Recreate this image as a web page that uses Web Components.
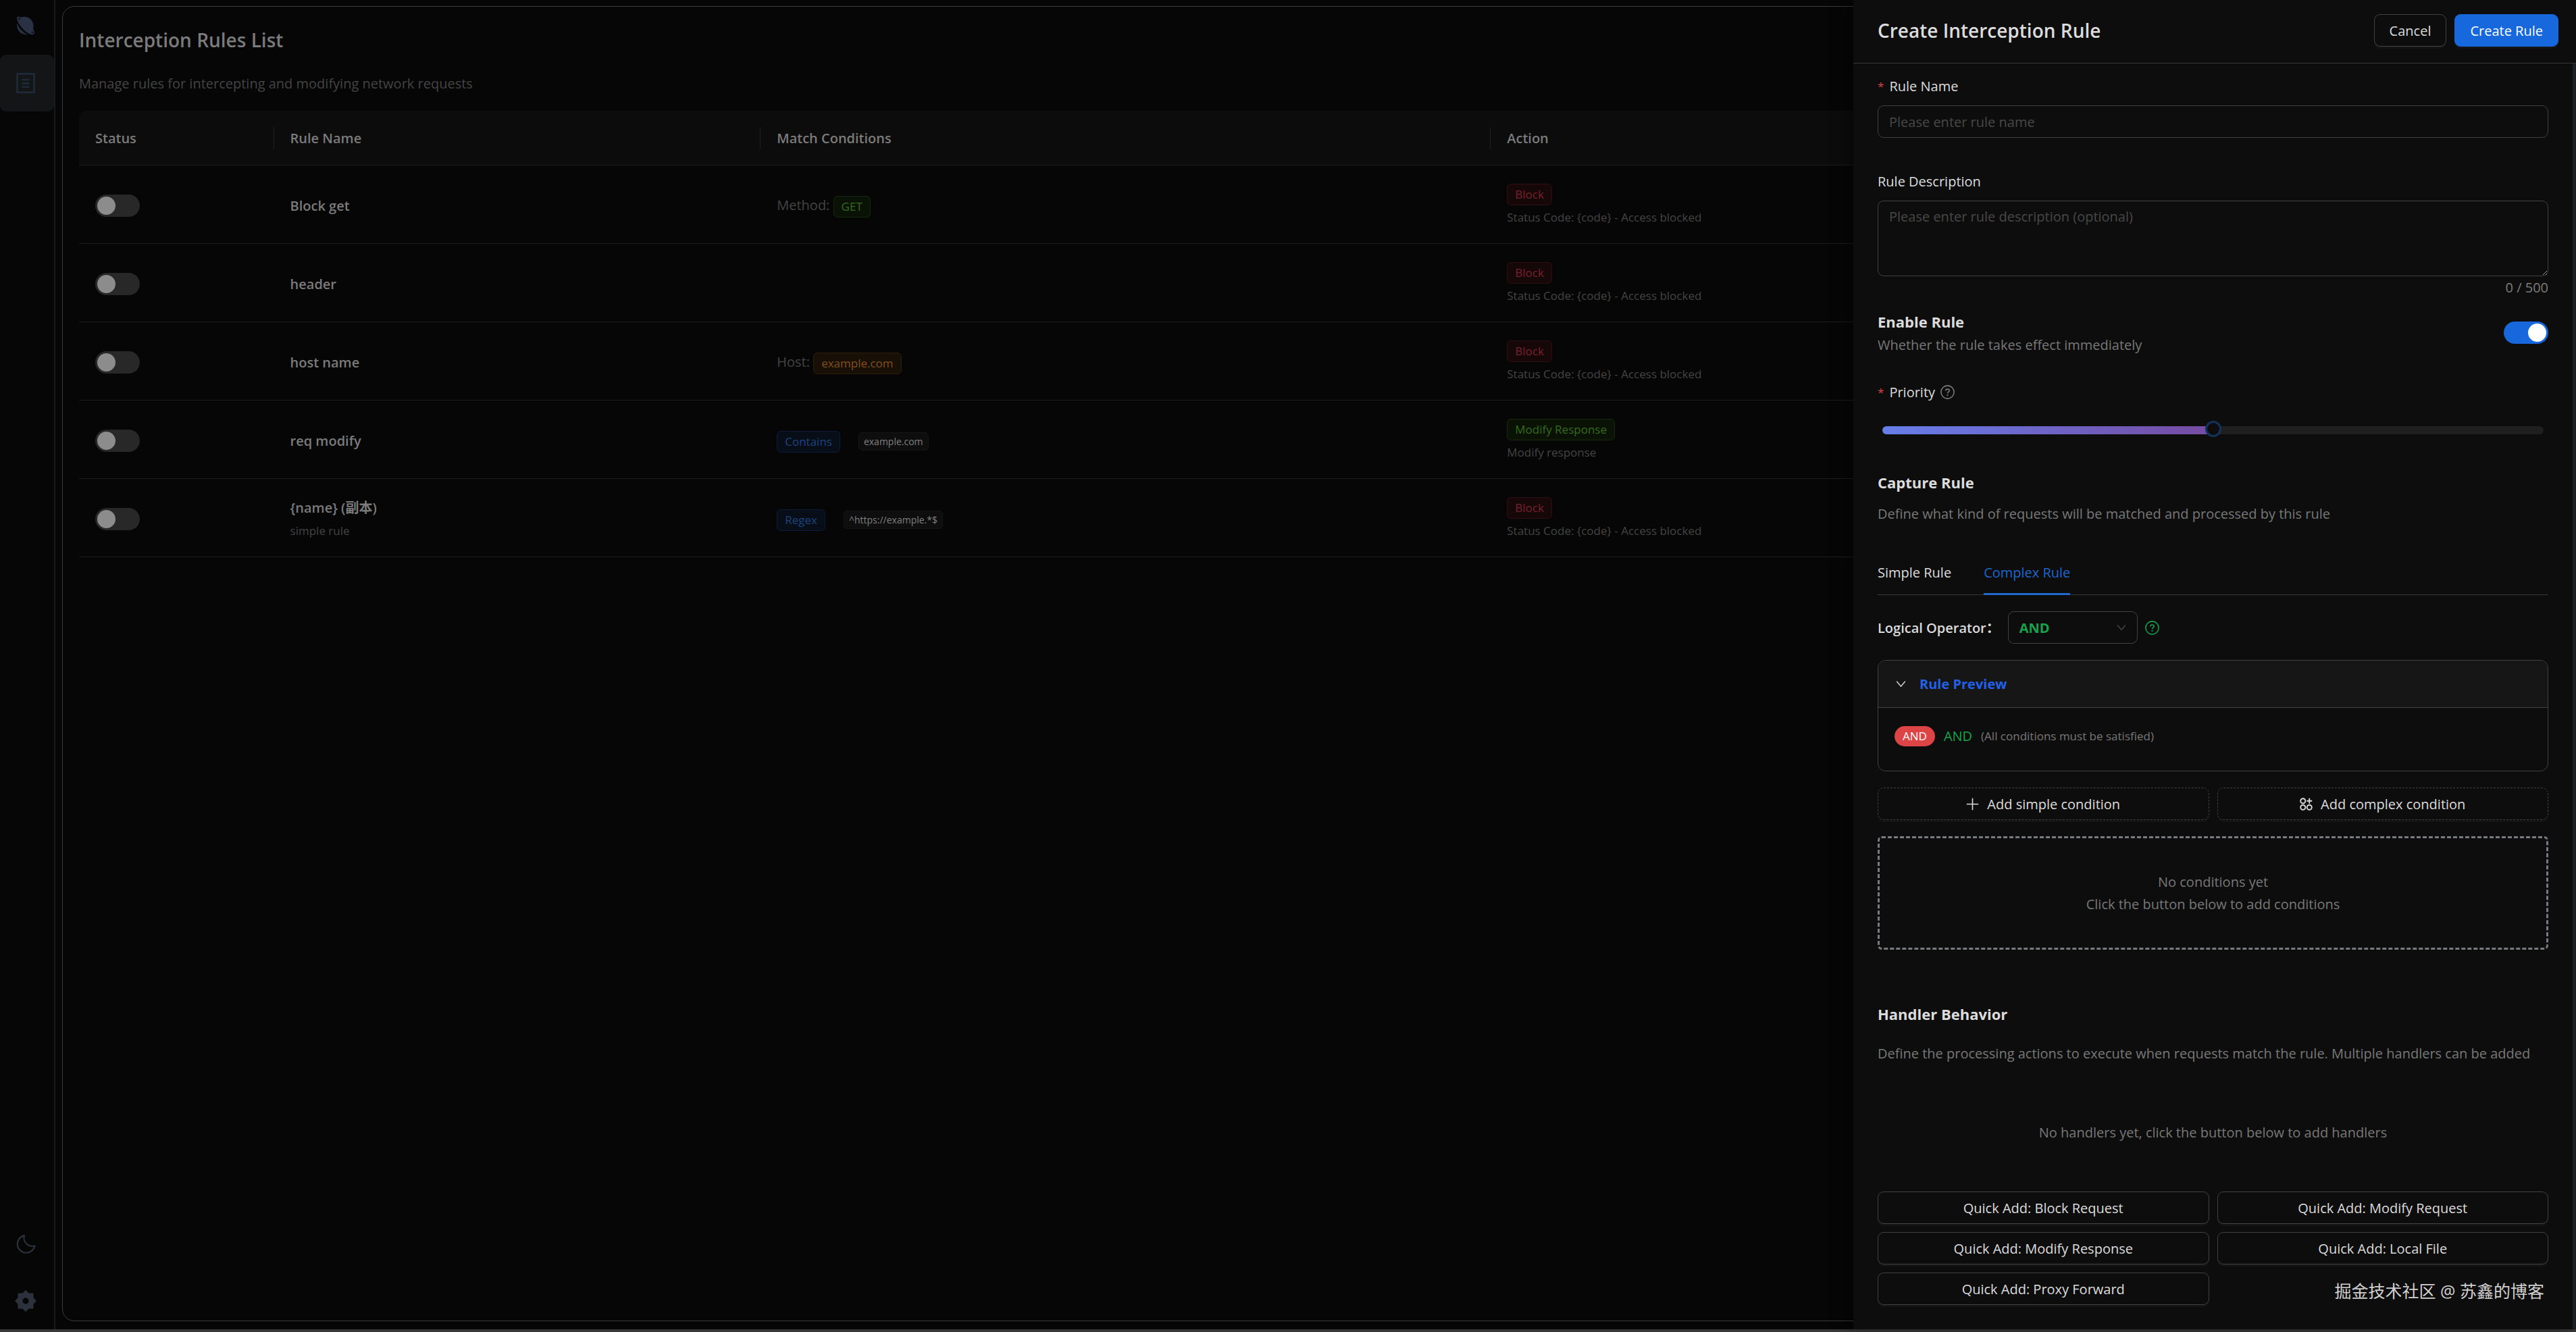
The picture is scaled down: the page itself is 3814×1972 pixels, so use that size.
<!DOCTYPE html>
<html lang="en">
<head>
<meta charset="utf-8">
<title>Interception Rules</title>
<style>
  html, body {
    height: 100%;
    margin: 0;
  }

  body {
    background: #060606;
    font: 20px/33px "Open Sans", "Noto Sans", "Noto Sans CJK SC", sans-serif;
    overflow: hidden;
  }
</style>
</head>
<body>
<app-shell>
  <side-bar slot="nav"></side-bar>
  <rules-panel></rules-panel>
  <rule-drawer slot="overlay"></rule-drawer>
</app-shell>

<script>
(function() {

  /**
   * Paths of the icons, by name. Every icon uses a 24 unit box.
   *
   * @readonly
   */
  const ICONS = {
    planet: `<path fill="currentColor" d="M4.2.8C2.100 0 .7 1 1 3.300c.4 3.600 3.200 8.300 7.200 12.500 4.200 4.400 8.700 7.300 12 7.500 2.600.1 3.400-1.900 2.500-4.600-.3-.9-.7-1.800-1.200-2.700 1-4.400 0-9-3-12C15 .6 9.800-.1 5.900 1.600A9 9 0 0 0 4.200.8z"/><path fill="currentColor" d="M1 8.600c-.6 4.400.7 8.700 3.700 11.600 2.500 2.500 6 3.600 9.600 3.200-2.600-1.300-5.300-3.300-7.800-5.900C4 14.900 2.100 11.800 1 8.600z"/><circle cx="4" cy="3.400" r="1" fill="#060606"/><circle cx="20.700" cy="20.600" r="1" fill="#060606"/>`,
    list: `<path fill="none" stroke="currentColor" stroke-width="2" d="M2 1h20v22H2zM7.500 8h9M7.500 12.300h9M7.500 16.600h9"/>`,
    moon: `<path fill="none" stroke="currentColor" stroke-width="1.700" stroke-linejoin="round" d="M10.300 1.700A10.400 10.400 0 1 0 22.800 14 10.200 10.200 0 0 1 10.300 1.700z"/>`,
    gear: `<path fill="currentColor" fill-rule="evenodd" d="M12 0l3.500 3.400h5.100v5.100L24 12l-3.400 3.500v5.100h-5.100L12 24l-3.500-3.400H3.400v-5.100L0 12l3.400-3.500V3.400h5.100zM12 8.600a3.400 3.400 0 1 0 0 6.800 3.400 3.400 0 0 0 0-6.800z"/>`,
    help: `<g fill="none" stroke="currentColor" stroke-width="1.800"><circle cx="12" cy="12" r="11"/><path d="M8.900 9.700c0-1.700 1.400-2.900 3.100-2.900s3.100 1.100 3.100 2.700c0 2.200-3.100 2.200-3.100 4.600"/></g><circle cx="12" cy="17" r="1.200" fill="currentColor"/>`,
    down: `<path fill="none" stroke="currentColor" stroke-width="2.200" d="M2 6l10 12L22 6"/>`,
    plus: `<path fill="none" stroke="currentColor" stroke-width="2" d="M12 1v22M1 12h22"/>`,
    nodes: `<g fill="none" stroke="currentColor" stroke-width="2.400"><circle cx="6" cy="6" r="4.500"/><circle cx="6" cy="18" r="4.500"/><circle cx="18" cy="18" r="4.500"/><path d="M18 1v10M13 6h10"/></g>`
  };

  /**
   * The rules that the table lists.
   */
  const RULES = [
    {name: 'Block get', match: 'Method: <rule-tag color="green">GET</rule-tag>', action: 'block'},
    {name: 'header', match: '', action: 'block'},
    {name: 'host name', match: 'Host: <rule-tag color="orange">example.com</rule-tag>', action: 'block'},
    {name: 'req modify', match: '<rule-tag color="blue">Contains</rule-tag><code>example.com</code>', action: 'modify'},
    {name: '{name} (副本)', note: 'simple rule', match: '<rule-tag color="blue">Regex</rule-tag><code>^https://example.*$</code>', action: 'block'}
  ];

  const ACTIONS = {
    block: '<rule-tag color="red">Block</rule-tag><small>Status Code: {code} - Access blocked</small>',
    modify: '<rule-tag color="green">Modify Response</rule-tag><small>Modify response</small>'
  };

  /**
   * Base of all the elements: stamps the class' markup into a shadow root.
   */
  class BaseElement extends HTMLElement {
    constructor() {
      super();
      this.attachShadow({mode: 'open'});
      const template = document.createElement('template');
      template.innerHTML = `<style>*{box-sizing:border-box}${this.constructor.css}</style>${this.render()}`;
      this.shadowRoot.appendChild(template.content.cloneNode(true));
    }
  }

  /**
   * `<ui-icon name="gear">` draws one icon at the size of `--size`.
   */
  class UiIcon extends BaseElement {
    static get css() {
      return `
        :host { display: inline-flex; flex: none; width: var(--size, 21px); height: var(--size, 21px); }
        svg { width: 100%; height: 100%; overflow: visible; }
      `;
    }
    render() {
      return `<svg viewBox="0 0 24 24" aria-hidden="true">${ICONS[this.getAttribute('name')]}</svg>`;
    }
  }

  /**
   * `<rule-tag color="red">` is a small bordered tag.
   */
  class RuleTag extends BaseElement {
    static get css() {
      return `
        :host {
          display: inline-block;
          box-sizing: border-box;
          height: 32px;
          padding: 0 11px;
          border: 1px solid;
          border-radius: 6px;
          font-size: 17px;
          line-height: 30px;
          vertical-align: middle;
        }
        :host([color="green"]) { color: #366b1b; background: #0a1206; border-color: #17280e; }
        :host([color="orange"]) { color: #83501a; background: #180f07; border-color: #2f1d0c; }
        :host([color="blue"]) { color: #1d437f; background: #080e18; border-color: #0d1c38; }
        :host([color="red"]) { color: #7a2029; background: #160709; border-color: #2d0f14; }
      `;
    }
    render() {
      return '<slot></slot>';
    }
  }

  /**
   * `<toggle-switch>` is a switch. Its content is the label; a switch with
   * no content takes its label from `name`.
   */
  class ToggleSwitch extends BaseElement {
    static get css() {
      return `
        :host { display: flex; align-items: center; justify-content: space-between; }
        input {
          appearance: none;
          flex: none;
          width: 66px;
          height: 33px;
          margin: 0;
          padding: 3px;
          border-radius: 17px;
          background: #282828;
        }
        input::before {
          content: "";
          display: block;
          width: 27px;
          height: 27px;
          border-radius: 50%;
          background: #8c8c8c;
        }
        input:checked { background: #1668dc; }
        input:checked::before { margin-left: auto; background: #fff; }
      `;
    }
    render() {
      const name = this.getAttribute('name');
      return `
        ${name ? '' : '<label for="toggle"><slot></slot></label>'}
        <input id="toggle" type="checkbox" role="switch" ${name ? `aria-label="${name}"` : ''} ${this.hasAttribute('checked') ? 'checked' : ''}>
      `;
    }
  }

  /**
   * `<ui-button>` wraps a button. `kind` is "primary" or "dashed".
   */
  class UiButton extends BaseElement {
    static get css() {
      return `
        :host { display: block; }
        button {
          display: flex;
          align-items: center;
          justify-content: center;
          gap: 12px;
          width: 100%;
          height: 48px;
          padding: 0 22px;
          border: 1px solid #424242;
          border-radius: 9px;
          background: #0d0d0d;
          color: #dcdcdc;
          font: inherit;
          box-shadow: 0 3px 0 rgba(255, 255, 255, .03);
        }
        :host([kind="primary"]) button { background: #1668dc; border-color: #1668dc; color: #fff; }
        :host([kind="dashed"]) button { border-style: dashed; }
      `;
    }
    render() {
      return '<button type="button"><slot></slot></button>';
    }
  }

  class TextField extends BaseElement {
    static get css() {
      return `
        :host { display: block; }
        label { display: flex; align-items: center; gap: 8px; margin-bottom: 12px; color: #dcdcdc; }
        :host([required]) label::before { content: "*"; color: #dc4446; font-size: 17px; }
        input, textarea {
          display: block;
          width: 100%;
          height: 48px;
          padding: 0 16px;
          border: 1px solid #424242;
          border-radius: 9px;
          background: #0d0d0d;
          color: #dcdcdc;
          font: inherit;
        }
        textarea { height: 112px; padding: 6px 16px; color-scheme: dark; }
        ::placeholder { color: #484848; opacity: 1; }
        output { display: block; text-align: right; color: #7c7c7c; }
      `;
    }
    render() {
      const hint = this.getAttribute('hint');
      const box = this.hasAttribute('rows')
        ? `<textarea id="box" maxlength="500" placeholder="${hint}"></textarea><output for="box">0 / 500</output>`
        : `<input id="box" type="text" placeholder="${hint}">`;
      return `<label for="box">${this.getAttribute('label')}</label>${box}`;
    }
  }

  /**
   * `<priority-slider>` is the labelled priority slider.
   */
  class PrioritySlider extends BaseElement {
    static get css() {
      return `
        :host { display: block; }
        label { display: flex; align-items: center; gap: 8px; color: #dcdcdc; }
        label::before { content: "*"; color: #dc4446; font-size: 17px; }
        ui-icon { color: #7b7b7b; }
        input { appearance: none; display: block; width: calc(100% - 14px); height: 24px; margin: 28px 7px 0; background: none; }
        input::-webkit-slider-runnable-track {
          height: 12px;
          border-radius: 6px;
          background: linear-gradient(90deg, #667eea, #764ba2) 0 0 / 50% 100% no-repeat #1f1f1f;
        }
        input::-webkit-slider-thumb {
          appearance: none;
          width: 24px;
          height: 24px;
          margin-top: -8px;
          border: 3px solid #15325b;
          border-radius: 50%;
          background: #0d0d0d;
        }
      `;
    }
    render() {
      return `
        <label for="priority">Priority<ui-icon name="help"></ui-icon></label>
        <input id="priority" type="range" min="0" max="100" value="50">
      `;
    }
  }

  /**
   * `<section-head>` is a heading with its description below it.
   */
  class SectionHead extends BaseElement {
    static get css() {
      return `
        :host { display: flex; flex-direction: column; gap: var(--gap, 0px); }
        h3 { margin: 0; color: #dcdcdc; font-size: 22px; font-weight: 700; line-height: 36px; }
        p { margin: 0; color: #787878; }
      `;
    }
    render() {
      return '<h3><slot name="title"></slot></h3><p><slot></slot></p>';
    }
  }

  /**
   * `<side-bar>` is the column of icons at the left.
   */
  class SideBar extends BaseElement {
    static get css() {
      return `
        :host { display: block; height: 100%; }
        nav {
          display: flex;
          flex-direction: column;
          height: 100%;
          width: 82px;
          border-right: 2px solid #1b1b1b;
        }
        ui-icon { --size: 28px; }
        .logo { padding: 24px 27px 0 24px; height: 81px; color: #2a3145; }
        button {
          display: flex;
          align-items: center;
          justify-content: center;
          height: 84px;
          padding: 0 4px 0 0;
          border: 0;
          border-radius: 9px;
          background: none;
          color: #2c323b;
        }
        button ui-icon { --size: 30px; }
        button[aria-current] { background: #141517; color: #1e2c3a; }
        button:last-child ui-icon { --size: 32px; }
        .space { flex: 1; }
      `;
    }
    render() {
      return `
        <nav>
          <div class="logo"><ui-icon name="planet"></ui-icon></div>
          <button aria-label="Rules" aria-current="page"><ui-icon name="list"></ui-icon></button>
          <div class="space"></div>
          <button aria-label="Theme"><ui-icon name="moon"></ui-icon></button>
          <button aria-label="Settings"><ui-icon name="gear"></ui-icon></button>
        </nav>
      `;
    }
  }

  /**
   * `<rules-panel>` is the card with the table of the rules.
   */
  class RulesPanel extends BaseElement {
    static get css() {
      return `
        :host {
          display: block;
          box-sizing: border-box;
          height: 100%;
          padding: 22px 24px;
          border: 1px solid #3c3c3c;
          border-radius: 18px;
          color: #444;
        }
        h2 { margin: 0; color: #7b7b7b; font-size: 28px; font-weight: 600; line-height: 54px; }
        p { margin: 21px 0 24px; }
        table { width: 100%; border-collapse: separate; border-spacing: 0; table-layout: fixed; }
        col:nth-child(1) { width: 7.88%; }
        col:nth-child(2) { width: 19.68%; }
        col:nth-child(3) { width: 29.52%; }
        th, td { padding: 0 24px; border-bottom: 1px solid #1e1e1e; text-align: left; font-weight: 400; }
        th {
          height: 81px;
          background: linear-gradient(#202020, #202020) 100% 50% / 1px 33px no-repeat #0c0c0c;
          color: #7b7b7b;
          font-weight: 600;
        }
        th:first-child { border-top-left-radius: 12px; }
        th:last-child { background: #0c0c0c; }
        td { height: 116px; padding-top: 4px; }
        strong { display: block; color: #7b7b7b; font-weight: 600; }
        small { display: block; font-size: 17px; line-height: 35px; }
        code {
          display: inline-block;
          margin-left: 27px;
          padding: 0 7px;
          border: 1px solid #151515;
          border-radius: 5px;
          background: #0e0e0e;
          color: #808080;
          font: 14px/25px "Open Sans", sans-serif;
          vertical-align: middle;
        }
      `;
    }
    render() {
      const rows = RULES.map((rule) => `
        <tr>
          <td><toggle-switch name="${rule.name}"></toggle-switch></td>
          <td><strong>${rule.name}</strong>${rule.note ? `<small>${rule.note}</small>` : ''}</td>
          <td>${rule.match}</td>
          <td>${ACTIONS[rule.action]}</td>
        </tr>
      `).join('');
      return `
        <h2>Interception Rules List</h2>
        <p>Manage rules for intercepting and modifying network requests</p>
        <table>
          <colgroup><col><col><col><col></colgroup>
          <thead><tr><th>Status</th><th>Rule Name</th><th>Match Conditions</th><th>Action</th></tr></thead>
          <tbody>${rows}</tbody>
        </table>
      `;
    }
  }

  /**
   * `<condition-editor>` holds the tabs, the operator and the conditions.
   */
  class ConditionEditor extends BaseElement {
    static get css() {
      return `
        :host { display: flex; flex-direction: column; gap: 24px; color: #dcdcdc; }
        .tabs { display: flex; gap: 48px; height: 50px; border-bottom: 1px solid #383838; }
        .tabs button {
          height: 50px;
          padding: 0 0 14px;
          border: 0;
          border-bottom: 3px solid transparent;
          background: none;
          color: inherit;
          font: inherit;
        }
        .tabs button[aria-selected="true"] { border-color: #1f6ad1; color: #1f66cc; }
        .operator { display: flex; align-items: center; gap: 12px; font-weight: 600; }
        .select { display: grid; align-items: center; }
        .select > * { grid-area: 1 / 1; }
        .select ui-icon { --size: 14px; justify-self: end; margin-right: 17px; color: #4a4a4a; }
        select {
          appearance: none;
          width: 192px;
          height: 48px;
          padding: 0 16px;
          border: 1px solid #424242;
          border-radius: 9px;
          background: #0d0d0d;
          color: #16a34a;
          font: inherit;
          font-weight: 700;
        }
        .operator > ui-icon { margin-left: -1px; color: #16a34a; }
        details { border: 1px solid #424242; border-radius: 12px; overflow: hidden; }
        summary {
          display: flex;
          align-items: center;
          gap: 20px;
          height: 70px;
          padding: 0 26px;
          border-bottom: 1px solid #424242;
          background: #161616;
          color: #2161ea;
          font-weight: 700;
        }
        summary ui-icon { --size: 15px; color: #dcdcdc; }
        .preview { display: flex; align-items: center; gap: 13px; height: 93px; padding: 0 24px 10px; color: #16a34a; }
        .preview b { padding: 0 12px; border-radius: 15px; background: #dc4446; color: #fff; font-weight: 400; font-size: 17px; line-height: 30px; }
        .preview span { font-weight: 500; }
        .preview small { color: #787878; font-size: 17px; }
        .pair { display: grid; grid-template-columns: 1fr 1fr; gap: 12px; }
        .pair ui-icon { --size: 19px; }
        .empty {
          display: flex;
          flex-direction: column;
          justify-content: center;
          height: 168px;
          border: 3px dashed #777a80;
          border-radius: 6px;
          color: #787878;
          text-align: center;
        }
      `;
    }
    render() {
      return `
        <div class="tabs" role="tablist">
          <button role="tab" aria-selected="false">Simple Rule</button>
          <button role="tab" aria-selected="true">Complex Rule</button>
        </div>
        <div class="operator">
          <label for="operator">Logical Operator：</label>
          <span class="select">
            <select id="operator"><option>AND</option><option>OR</option></select>
            <ui-icon name="down"></ui-icon>
          </span>
          <ui-icon name="help"></ui-icon>
        </div>
        <details open>
          <summary><ui-icon name="down"></ui-icon>Rule Preview</summary>
          <div class="preview"><b>AND</b><span>AND</span><small>(All conditions must be satisfied)</small></div>
        </details>
        <div class="pair">
          <ui-button kind="dashed"><ui-icon name="plus"></ui-icon>Add simple condition</ui-button>
          <ui-button kind="dashed"><ui-icon name="nodes"></ui-icon>Add complex condition</ui-button>
        </div>
        <div class="empty">
          <span>No conditions yet</span>
          <span>Click the button below to add conditions</span>
        </div>
      `;
    }
  }

  /**
   * `<rule-drawer>` is the form for a new rule.
   */
  class RuleDrawer extends BaseElement {
    static get css() {
      return `
        :host {
          display: flex;
          flex-direction: column;
          width: 1070px;
          height: 100%;
          background: #0d0d0d;
          box-shadow: -9px 0 24px rgba(0, 0, 0, .4);
          color: #dcdcdc;
        }
        header {
          display: flex;
          align-items: center;
          gap: 12px;
          height: 94px;
          padding: 0 26px 3px 36px;
          border-bottom: 1px solid #383838;
        }
        h2 { flex: 1; margin: 0; font-size: 28px; font-weight: 600; line-height: 36px; }
        form { flex: 1; padding: 17px 36px 0; border-right: 5px solid #1c1f24; }
        text-field { margin-bottom: 48px; }
        text-field[rows] { margin-bottom: 16px; }
        toggle-switch { margin-bottom: 37px; }
        .capture { --gap: 12px; margin: 47px 0 54px; }
        .handler { --gap: 24px; margin: 77px 0 84px; }
        .none { margin: 0 0 71px; color: #787878; text-align: center; }
        .quick { display: grid; grid-template-columns: 1fr 1fr; gap: 12px; }
      `;
    }
    render() {
      return `
        <header>
          <h2>Create Interception Rule</h2>
          <ui-button>Cancel</ui-button>
          <ui-button kind="primary">Create Rule</ui-button>
        </header>
        <form>
          <text-field required label="Rule Name" hint="Please enter rule name"></text-field>
          <text-field rows="3" label="Rule Description" hint="Please enter rule description (optional)"></text-field>
          <toggle-switch checked>
            <section-head><span slot="title">Enable Rule</span>Whether the rule takes effect immediately</section-head>
          </toggle-switch>
          <priority-slider></priority-slider>
          <section-head class="capture">
            <span slot="title">Capture Rule</span>Define what kind of requests will be matched and processed by this rule
          </section-head>
          <condition-editor></condition-editor>
          <section-head class="handler">
            <span slot="title">Handler Behavior</span>Define the processing actions to execute when requests match the rule. Multiple handlers can be added
          </section-head>
          <p class="none">No handlers yet, click the button below to add handlers</p>
          <div class="quick">
            <ui-button>Quick Add: Block Request</ui-button>
            <ui-button>Quick Add: Modify Request</ui-button>
            <ui-button>Quick Add: Modify Response</ui-button>
            <ui-button>Quick Add: Local File</ui-button>
            <ui-button>Quick Add: Proxy Forward</ui-button>
          </div>
        </form>
      `;
    }
  }

  /**
   * `<app-shell>` places the navigation, the page and what lies over it.
   */
  class AppShell extends BaseElement {
    static get css() {
      return `
        :host {
          position: relative;
          display: grid;
          grid-template-columns: auto 1fr;
          box-sizing: border-box;
          height: 100vh;
          border-bottom: 4px solid #383838;
        }
        main { min-width: 0; padding: 9px 10px 12px; }
        .overlay { position: absolute; top: 0; right: 0; bottom: 0; }
        .mark { position: absolute; right: 47px; bottom: 40px; color: #d0d0d0; font-size: 25px; }
      `;
    }
    render() {
      return `
        <slot name="nav"></slot>
        <main><slot></slot></main>
        <div class="overlay"><slot name="overlay"></slot></div>
        <div class="mark">掘金技术社区 @ 苏鑫的博客</div>
      `;
    }
  }

  // Define the elements, the inner ones first.
  const ELEMENTS = {
    'ui-icon': UiIcon,
    'rule-tag': RuleTag,
    'toggle-switch': ToggleSwitch,
    'ui-button': UiButton,
    'text-field': TextField,
    'priority-slider': PrioritySlider,
    'section-head': SectionHead,
    'side-bar': SideBar,
    'rules-panel': RulesPanel,
    'condition-editor': ConditionEditor,
    'rule-drawer': RuleDrawer,
    'app-shell': AppShell
  };
  Object.keys(ELEMENTS).forEach((name) => customElements.define(name, ELEMENTS[name]));
})();
</script>
</body>
</html>
